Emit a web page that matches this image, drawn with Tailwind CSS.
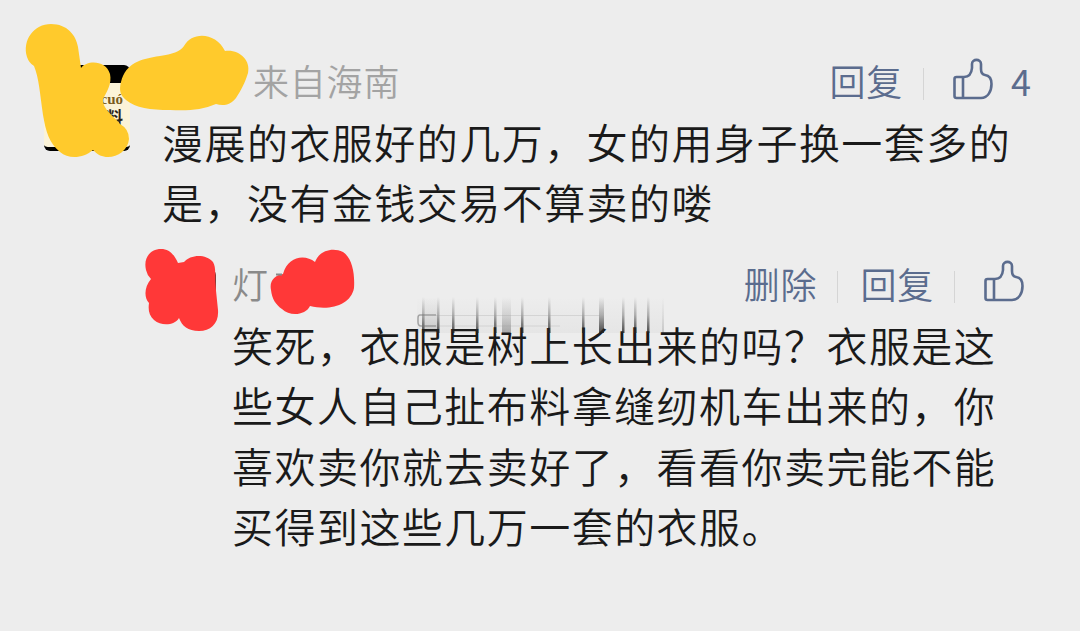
<!DOCTYPE html>
<html lang="zh-CN">
<head>
  <meta charset="UTF-8" />
  <title>评论</title>
  <script src="https://cdn.jsdelivr.net/npm/@tailwindcss/browser@4"></script>
</head>
<body class="bg-[#ededed] font-['Noto_Sans_CJK_SC',sans-serif] font-[350]">
  <div class="relative w-[1080px] h-[631px] overflow-hidden pt-[55px] pl-11">

    <!-- Comment -->
    <div class="flex">
      <div class="mt-[10px] w-[86px] h-[86px] shrink-0 rounded-md overflow-hidden bg-[#fbf3d8] border-t-[18px] border-b-4 border-black flex flex-col items-end pr-[7px]">
        <span class="mt-[10px] font-['Liberation_Serif',serif] text-[15px] leading-3 font-bold text-[#7a5c22]">cuó</span>
        <span class="text-[17px] leading-[24px] font-bold text-[#2b2418]">料</span>
      </div>
      <div class="ml-8 w-[880px]">
        <div class="flex items-center h-[50px]">
          <span class="ml-[91px] text-[36px] leading-[50px] tracking-[0.8px] text-[#a3a3a3]">来自海南</span>
          <div class="ml-auto mr-[11px] flex items-center text-[#5b6c8e]">
            <span class="text-[36px] leading-[50px] tracking-[0.8px]">回复</span>
            <span class="ml-5 mt-2 w-px h-8 bg-[#d5d5d5]"></span>
            <svg class="ml-7 -mt-[3px] w-[42px] h-[44px]" viewBox="0 0 42 44" fill="none" stroke="currentColor" stroke-width="2.6" stroke-linejoin="round" stroke-linecap="round">
              <path d="M12 20H4.500Q2.500 20 2.500 22V39Q2.500 41 4.500 41H29C36 41 39.500 34 39.500 27C39.500 21 37 18.500 33 18C29.500 17.500 29 15 29 12V7C29 1.500 20 1.500 20 7V11C19.500 16.500 17 20 12 20ZM11 20V41" />
            </svg>
            <span class="ml-[17px] w-5 text-[36px] leading-[50px] font-normal">4</span>
          </div>
        </div>
        <p class="mt-[6px] text-[41px] leading-[60.4px] tracking-[1.46px] text-[#1a1a1a] whitespace-nowrap">漫展的衣服好的几万，女的用身子换一套多的<br />是，没有金钱交易不算卖的喽</p>
      </div>
    </div>

    <!-- Reply -->
    <div class="mt-[26px] ml-[104px] flex">
      <div class="mt-[11px] w-[68px] h-[52px] shrink-0 pl-[30px]">
        <div class="h-11 rounded-md bg-[#8a3836]"></div>
      </div>
      <div class="ml-4 w-[800px]">
        <div class="flex items-center h-[50px]">
          <span class="text-[36px] leading-[50px] tracking-[0.8px] text-[#8a8a8a]">灯</span>
          <div class="ml-auto mr-[7px] flex items-center text-[#5b6c8e]">
            <span class="text-[36px] leading-[50px] tracking-[0.8px]">删除</span>
            <span class="ml-5 mt-2 w-px h-8 bg-[#d5d5d5]"></span>
            <span class="ml-[22px] text-[36px] leading-[50px] tracking-[0.8px]">回复</span>
            <span class="ml-5 mt-2 w-px h-8 bg-[#d5d5d5]"></span>
            <svg class="ml-7 -mt-[3px] w-[42px] h-[44px]" viewBox="0 0 42 44" fill="none" stroke="currentColor" stroke-width="2.6" stroke-linejoin="round" stroke-linecap="round">
              <path d="M12 20H4.500Q2.500 20 2.500 22V39Q2.500 41 4.500 41H29C36 41 39.500 34 39.500 27C39.500 21 37 18.500 33 18C29.500 17.500 29 15 29 12V7C29 1.500 20 1.500 20 7V11C19.500 16.500 17 20 12 20ZM11 20V41" />
            </svg>
          </div>
        </div>
        <p class="mt-[6px] text-[41px] leading-[60.4px] tracking-[1.46px] text-[#1a1a1a] whitespace-nowrap">笑死，衣服是树上长出来的吗？衣服是这<br />些女人自己扯布料拿缝纫机车出来的，你<br />喜欢卖你就去卖好了，看看你卖完能不能<br />买得到这些几万一套的衣服。</p>
      </div>
    </div>

    <!-- Marker strokes and the smear above the reply -->
    <svg class="absolute inset-0 w-[1080px] h-[631px]" viewBox="0 0 1080 631">
      <defs>
        <linearGradient id="smear" x1="0" y1="297" x2="0" y2="333" gradientUnits="userSpaceOnUse">
          <stop offset="0" stop-color="#222" stop-opacity="0" />
          <stop offset="0.5" stop-color="#222" stop-opacity="0.3" />
          <stop offset="1" stop-color="#222" stop-opacity="0.8" />
        </linearGradient>
        <linearGradient id="haze" x1="0" y1="297" x2="0" y2="333" gradientUnits="userSpaceOnUse">
          <stop offset="0" stop-color="#555" stop-opacity="0" />
          <stop offset="1" stop-color="#555" stop-opacity="0.05" />
        </linearGradient>
      </defs>
      <path d="M27 57C22 40 34 24 51 24C67 24 76 35 78 47L81 68C87 60 106 60 110 74C112 84 107 91 103 99C102 109 114 116 120 124Q129 129 129 139C128 150 118 157 108 157C102 157 98 155 93 150C84 158 69 160 60 152C49 143 46 132 43 115C40 94 39 78 34 66Q29 63 27 57Z" fill="#ffca2c" />
      <path d="M121 82C126 63 140 59 160 56C172 54 180 52 184 46C192 31 216 32 225 51C239 49 251 60 248 73C245 83 241 90 236 98C230 106 222 106 216 104C202 110 188 111 170 110C150 110 136 108 126 100C120 95 119 90 121 82Z" fill="#ffca2c" />
      <path d="M146 270C143 257 151 249 161 249C169 249 174 254 178 263L184 262C190 255 205 253 213 262C216 267 215 274 215 281L218 310C219 323 211 331 199 331C188 331 182 326 179 318C175 325 162 327 154 320C149 315 148 310 149 303C144 298 144 287 151 279Q147 275 146 270Z" fill="#ff3838" />
      <path d="M271 290C269 281 275 275 283 274C288 256 305 254 315 262C319 251 332 247 343 252C352 258 355 273 354 288C351 305 330 311 310 306C306 315 290 317 282 309C276 305 272 299 271 290Z" fill="#ff3838" />
      <path d="M276 274.500h6" stroke="#888" stroke-width="2" />
      <path fill="url(#haze)" d="M417 297h247v36h-247z" />
      <path fill="url(#smear)" d="M422 297h2.500v36h-2.500zM437 297h2.500v36h-2.500zM452 297h2.500v36h-2.500zM476 297h2.500v36h-2.500zM494 297h2.500v36h-2.500zM521 297h2.500v36h-2.500zM548 297h2.500v36h-2.500zM582 297h2.500v36h-2.500zM599 297h5v36h-5zM622 297h2.500v36h-2.500zM634 297h2.500v36h-2.500zM647 297h2.500v36h-2.500z" />
      <path fill="url(#smear)" opacity="0.4" d="M502 297h9v36h-9z" />
      <path fill="url(#smear)" opacity="0.2" d="M424 297h13v36h-13zM662 297h2v36h-2z" />
      <path d="M436 315H420Q418 315 418 318V322Q418 326 421 326H436" fill="none" stroke="#777" stroke-width="1.500" opacity="0.6" />
      <path d="M436 315.500H600M436 326H560" stroke="#999" opacity="0.25" />
    </svg>
  </div>
</body>
</html>
